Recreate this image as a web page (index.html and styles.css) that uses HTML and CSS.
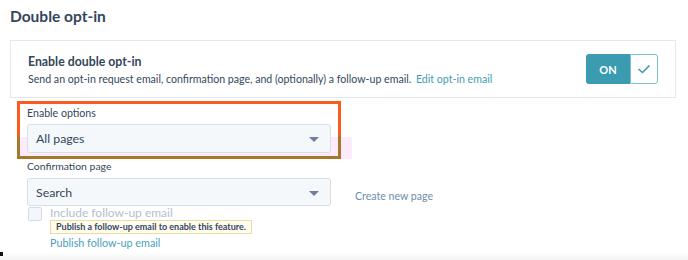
FILE: index.html
```html
<!DOCTYPE html>
<html lang="en">
<head>
  <meta charset="UTF-8" />
  <title>Double opt-in</title>
  <link rel="stylesheet" href="styles.css">
</head>
<body>
  <div class="page">
    <h1>Double opt-in</h1>

    <div class="card">
      <div class="card-text">
        <h2>Enable double opt-in</h2>
        <p>Send an opt-in request email, confirmation page, and (optionally) a follow-up email. <a href="#">Edit opt-in email</a></p>
      </div>
      <div class="toggle">
        <span class="toggle-on">ON</span>
        <span class="toggle-check">
          <svg width="14" height="10" viewBox="0 0 14 10"><path d="M1.5 5 L5.5 8.5 L12.5 1.5" fill="none" stroke="#3a9bb1" stroke-width="1.6"/></svg>
        </span>
      </div>
    </div>

    <div class="options">
      <div class="highlight"></div>
      <div class="annotated">
        <label class="field-label">Enable options</label>
        <div class="select">All pages<span class="caret"></span></div>
      </div>

      <label class="field-label field-label-second">Confirmation page</label>
      <div class="select-row">
        <div class="select">Search<span class="caret"></span></div>
        <a class="muted-link" href="#">Create new page</a>
      </div>

      <div class="checkbox-row">
        <span class="checkbox"></span>
        <span class="checkbox-label">Include follow-up email</span>
      </div>
      <div class="hint">Publish a follow-up email to enable this feature.</div>
      <a class="link" href="#">Publish follow-up email</a>
    </div>
  </div>
  <div class="bottom-shade"><span class="corner-mark"></span></div>
</body>
</html>
```

FILE: styles.css
```css
* {
  box-sizing: border-box;
}

body {
  margin: 0;
  font-family: Lato, "Open Sans", sans-serif;
  color: #33475b;
  background: #fff;
  height: 260px;
  overflow: hidden;
  position: relative;
}

.page {
  padding: 0 12px 0 10px;
}

h1 {
  font-size: 15.5px;
  font-weight: 700;
  margin: 0;
  padding-top: 7px;
  height: 40px;
}

.card {
  display: flex;
  align-items: center;
  justify-content: space-between;
  border: 1px solid #e3e8ee;
  height: 58px;
  padding: 0 17px;
}

.card h2 {
  font-size: 12.3px;
  font-weight: 700;
  margin: 0 0 4px;
}

.card p {
  font-size: 10.6px;
  margin: 0;
}

a {
  color: #3f9cb5;
  text-decoration: none;
}

.card p a {
  margin-left: 2px;
}

.toggle {
  display: flex;
  height: 30px;
}

.toggle-on {
  width: 44px;
  background: #3a9bb1;
  color: #fff;
  font-size: 11px;
  font-weight: 700;
  display: flex;
  align-items: center;
  justify-content: center;
  border-radius: 3px 0 0 3px;
}

.toggle-check {
  width: 28px;
  border: 1px solid #7cc0cf;
  border-radius: 0 3px 3px 0;
  display: flex;
  align-items: center;
  justify-content: center;
  background: #fff;
}

.options {
  position: relative;
  padding-left: 7px;
  padding-top: 3px;
}

.highlight {
  position: absolute;
  left: 10px;
  top: 39px;
  width: 332px;
  height: 22px;
  background: #fdeafa;
}

.annotated {
  position: relative;
  width: 324px;
  height: 58px;
  border: 3px solid;
  border-image: linear-gradient(to bottom, #fc5a1e 62%, #a8782a 62%) 1;
  padding: 3px 0 0 7px;
}

.field-label {
  display: block;
  font-size: 10.6px;
  line-height: 13px;
  color: #33475b;
  margin-bottom: 4px;
}

.field-label-second {
  margin: 1px 0 5px 10px;
  font-size: 10.4px;
}

.select {
  position: relative;
  flex: none;
  width: 304px;
  height: 29px;
  background: #f5f8fa;
  border: 1px solid #d6e0ea;
  border-radius: 3px;
  font-size: 12.3px;
  padding: 6px 8px;
}

.caret {
  position: absolute;
  right: 11px;
  top: 12px;
  border-left: 5px solid transparent;
  border-right: 5px solid transparent;
  border-top: 5px solid #6e7e9e;
}

.select-row {
  display: flex;
  align-items: flex-start;
  padding-left: 10px;
}

.select-row .select {
  height: 28px;
}

.muted-link {
  color: #6d8eac;
  font-size: 10.6px;
  line-height: 13px;
  margin-left: 24px;
  padding-top: 12px;
}

.checkbox-row {
  display: flex;
  align-items: flex-start;
  padding-left: 11px;
  margin-top: 1px;
  height: 14px;
}

.checkbox {
  width: 14px;
  height: 14px;
  border: 1px solid #d3dce8;
  background: #f3f6fa;
  border-radius: 2px;
}

.checkbox-label {
  font-size: 12px;
  line-height: 12px;
  color: #b3c0d0;
  margin-left: 8px;
  margin-top: 0;
}

.hint {
  width: fit-content;
  margin: -1px 0 0 33px;
  font-size: 9px;
  line-height: 12px;
  font-weight: 700;
  color: #33475b;
  background: #fffdf2;
  border: 1px solid #f0dc9a;
  padding: 0 5px;
}

.link {
  display: block;
  font-size: 10.8px;
  line-height: 13px;
  margin: 2px 0 0 33px;
  color: #4a9fba;
}

.bottom-shade {
  position: absolute;
  left: 0;
  right: 0;
  bottom: 0;
  height: 8px;
  background: linear-gradient(to bottom, #ffffff, #f3f3f3);
}

.corner-mark {
  position: absolute;
  left: 0;
  top: 0;
  width: 3px;
  height: 4px;
  background: #111;
}
```
